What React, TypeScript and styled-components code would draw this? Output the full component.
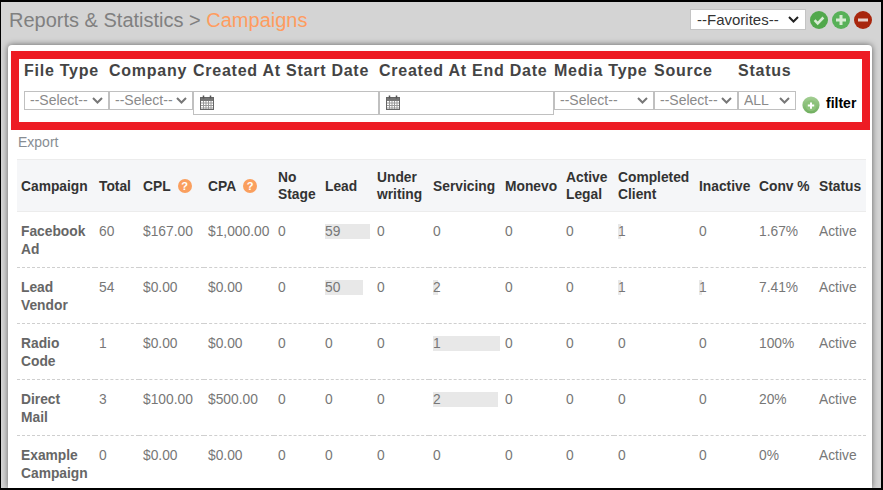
import React from 'react';
import styled, { createGlobalStyle, css } from 'styled-components';

const GlobalStyle = createGlobalStyle`
  html, body {
    margin: 0;
    padding: 0;
    background: #fff;
    overflow: hidden;
  }
  * {
    box-sizing: border-box;
  }
`;

const chevron = (color: string) =>
  `url("data:image/svg+xml,%3Csvg xmlns='http://www.w3.org/2000/svg' width='11' height='7'%3E%3Cpath d='M1 1l4.500 4.500L10 1' fill='none' stroke='${color}' stroke-width='2'/%3E%3C/svg%3E")`;

const selectBase = css`
  appearance: none;
  border-radius: 0;
  outline: none;
  background-color: #fff;
  background-repeat: no-repeat;
`;

const Frame = styled.div`
  width: 883px;
  height: 490px;
  display: flex;
  flex-direction: column;
  overflow: hidden;
  background: #d4d4d4;
  border: solid #000;
  border-width: 2px 2px 2px 1px;
  font-family: 'Liberation Sans', Arial, sans-serif;
`;

const TopBar = styled.header`
  height: 43px;
  flex: none;
  display: flex;
  justify-content: space-between;
  padding: 6px 9px 0 8px;
`;

const Title = styled.h1`
  margin: 0;
  font-size: 20px;
  line-height: 24px;
  font-weight: 400;
  color: #808080;
`;

const Crumb = styled.span`
  color: #ff9c5f;
`;

const FavBar = styled.div`
  display: flex;
  align-items: flex-start;
  gap: 4px;
  margin-top: 1px;
`;

const FavSelect = styled.select`
  ${selectBase}
  width: 116px;
  height: 21px;
  padding: 0 0 0 6px;
  border: 1px solid #c4c4c4;
  background-image: ${chevron('%23222')};
  background-position: right 6px center;
  color: #333;
  font: 15px 'Liberation Sans', Arial, sans-serif;
`;

const RoundIcon = styled.svg`
  display: block;
  width: 18px;
  height: 18px;
  margin-top: 2px;
`;

const Panel = styled.main`
  flex: 1;
  min-height: 0;
  margin: 0 9px 0 7px;
  padding: 6px 3px 0;
  overflow: hidden;
  background: #fff;
  border-radius: 4px 4px 0 0;
  box-shadow: 0 0 6px rgba(0, 0, 0, 0.55);
`;

const FilterBox = styled.section`
  height: 79px;
  margin-right: -1px;
  padding: 0 5px;
  display: flex;
  border: 8px solid #ed1c24;
`;

const Field = styled.div<{ $w: number }>`
  width: ${(p) => p.$w}px;
  flex: none;
`;

const FieldLabel = styled.div`
  height: 32px;
  padding-top: 3px;
  color: #444;
  font-size: 16px;
  line-height: 17px;
  font-weight: 700;
  letter-spacing: 0.75px;
  white-space: nowrap;
`;

const FieldSelect = styled.select`
  ${selectBase}
  display: block;
  width: 100%;
  height: 19px;
  padding: 0 0 1px 5px;
  border: 1px solid #c0c0c0;
  background-image: ${chevron('%23777')};
  background-position: right 5px center;
  color: #8a8a8a;
  font: 14px 'Liberation Sans', Arial, sans-serif;
`;

const DateBox = styled.div`
  height: 24px;
  padding: 3px 0 0 6px;
  border: 1px solid #c0c0c0;
  background: #fff;
`;

const FilterAction = styled.div`
  margin: 34px 0 0 6px;
  height: 24px;
  display: flex;
  align-items: center;
  gap: 6px;
  color: #000;
  font-size: 14px;
  font-weight: 700;
`;

const FilterText = styled.span`
  margin-top: -4px;
`;

const ExportLink = styled.div`
  height: 29px;
  padding: 4px 0 0 7px;
  color: #878d93;
  font-size: 14px;
  line-height: 16px;
`;

const Table = styled.table`
  width: 849px;
  margin-left: 6px;
  table-layout: fixed;
  border-collapse: collapse;
`;

const HeadRow = styled.tr`
  height: 52px;
  background: #f5f6f8;
  border-top: 1px solid #ececec;
  border-bottom: 1px solid #ececec;
`;

const Th = styled.th`
  padding: 1px 0 0 4px;
  color: #333;
  font-size: 13.8px;
  line-height: 17px;
  font-weight: 700;
  text-align: left;
  white-space: nowrap;
`;

const Row = styled.tr`
  height: 56px;
  border-bottom: 1px dashed #cfcfcf;

  &:last-child {
    border-bottom: 0;
  }
`;

const Td = styled.td`
  position: relative;
  padding: 11px 0 0 4px;
  vertical-align: top;
  color: #777;
  font-size: 13.8px;
  line-height: 18px;
`;

const NameCell = styled(Td)`
  color: #666;
  font-weight: 700;
`;

const Bar = styled.span`
  position: absolute;
  top: 12px;
  left: 4px;
  height: 15px;
  background: #e8e8e8;
`;

const CellValue = styled.span`
  position: relative;
`;

const HelpDot = styled.span`
  display: inline-block;
  width: 14px;
  height: 14px;
  margin-left: 7px;
  border-radius: 50%;
  background: #fa9f5e;
  color: #fff;
  font-size: 11px;
  line-height: 14px;
  font-weight: 700;
  text-align: center;
  vertical-align: 1px;
`;

const CheckIcon = () => (
  <RoundIcon viewBox="0 0 18 18">
    <circle cx="9" cy="9" r="9" fill="#52a84c" />
    <path d="M4.600 9.200l3.100 3.100 5.700-5.800" fill="none" stroke="#d8ecd4" strokeWidth="2.600" />
  </RoundIcon>
);

const PlusIcon = () => (
  <RoundIcon viewBox="0 0 18 18">
    <circle cx="9" cy="9" r="9" fill="#58b158" />
    <path d="M9 4v10M4 9h10" stroke="#d8ecd4" strokeWidth="3" />
  </RoundIcon>
);

const MinusIcon = () => (
  <RoundIcon viewBox="0 0 18 18">
    <circle cx="9" cy="9" r="9" fill="#a8260d" />
    <path d="M4 9h10" stroke="#e6d2cc" strokeWidth="3" />
  </RoundIcon>
);

const FilterPlusIcon = () => (
  <svg width="18" height="18" viewBox="0 0 18 18" style={{ display: 'block', flex: 'none' }}>
    <defs>
      <linearGradient id="filterGreen" x1="0" y1="0" x2="0" y2="1">
        <stop offset="0" stopColor="#a4cf94" />
        <stop offset="1" stopColor="#6fae5e" />
      </linearGradient>
    </defs>
    <circle cx="9" cy="9" r="8.600" fill="url(#filterGreen)" />
    <circle cx="9" cy="9.600" r="5.400" fill="#8cc27a" />
    <path d="M9 6.400v6.400M5.800 9.600h6.400" stroke="#fff" strokeWidth="2" />
  </svg>
);

const CalendarIcon = () => (
  <svg width="14" height="15" viewBox="0 0 14 15" style={{ display: 'block' }}>
    <rect x="0.500" y="2.500" width="13" height="12" fill="#fff" stroke="#666" />
    <rect x="1" y="3" width="12" height="3" fill="#777" />
    <path
      d="M1 8h12M1 10.500h12M1 13h12M3.500 6v8M6 6v8M8.500 6v8M11 6v8"
      stroke="#999"
      strokeWidth="1"
    />
    <path d="M3.500 0.500v3M10.500 0.500v3" stroke="#555" strokeWidth="1.500" />
  </svg>
);

type Filter = { label: string; width: number; kind: 'select' | 'date'; placeholder?: string };

const filters: Filter[] = [
  { label: 'File Type', width: 85, kind: 'select' },
  { label: 'Company', width: 84, kind: 'select' },
  { label: 'Created At Start Date', width: 186, kind: 'date' },
  { label: 'Created At End Date', width: 175, kind: 'date' },
  { label: 'Media Type', width: 100, kind: 'select' },
  { label: 'Source', width: 84, kind: 'select' },
  { label: 'Status', width: 58, kind: 'select', placeholder: 'ALL' },
];

const columnWidths = [78, 44, 65, 70, 47, 52, 56, 72, 61, 52, 81, 60, 60, 51];

const headers: React.ReactNode[] = [
  'Campaign',
  'Total',
  <>CPL<HelpDot>?</HelpDot></>,
  <>CPA<HelpDot>?</HelpDot></>,
  <>No<br />Stage</>,
  'Lead',
  <>Under<br />writing</>,
  'Servicing',
  'Monevo',
  <>Active<br />Legal</>,
  <>Completed<br />Client</>,
  'Inactive',
  'Conv %',
  'Status',
];

type Campaign = {
  first: string;
  second: string;
  total: string;
  cpl: string;
  cpa: string;
  stages: { value: string; bar?: number }[];
  conv: string;
};

const v = (value: string, bar?: number) => ({ value, bar });

const campaigns: Campaign[] = [
  {
    first: 'Facebook',
    second: 'Ad',
    total: '60',
    cpl: '$167.00',
    cpa: '$1,000.00',
    stages: [v('0'), v('59', 45), v('0'), v('0'), v('0'), v('0'), v('1', 3), v('0')],
    conv: '1.67%',
  },
  {
    first: 'Lead',
    second: 'Vendor',
    total: '54',
    cpl: '$0.00',
    cpa: '$0.00',
    stages: [v('0'), v('50', 38), v('0'), v('2', 5), v('0'), v('0'), v('1', 3), v('1', 3)],
    conv: '7.41%',
  },
  {
    first: 'Radio',
    second: 'Code',
    total: '1',
    cpl: '$0.00',
    cpa: '$0.00',
    stages: [v('0'), v('0'), v('0'), v('1', 67), v('0'), v('0'), v('0'), v('0')],
    conv: '100%',
  },
  {
    first: 'Direct',
    second: 'Mail',
    total: '3',
    cpl: '$100.00',
    cpa: '$500.00',
    stages: [v('0'), v('0'), v('0'), v('2', 65), v('0'), v('0'), v('0'), v('0')],
    conv: '20%',
  },
  {
    first: 'Example',
    second: 'Campaign',
    total: '0',
    cpl: '$0.00',
    cpa: '$0.00',
    stages: [v('0'), v('0'), v('0'), v('0'), v('0'), v('0'), v('0'), v('0')],
    conv: '0%',
  },
];

const App = () => {
  return (
    <Frame>
      <GlobalStyle />
      <TopBar>
        <Title>
          Reports &amp; Statistics &gt; <Crumb>Campaigns</Crumb>
        </Title>
        <FavBar>
          <FavSelect defaultValue="">
            <option value="">--Favorites--</option>
          </FavSelect>
          <CheckIcon />
          <PlusIcon />
          <MinusIcon />
        </FavBar>
      </TopBar>
      <Panel>
        <FilterBox>
          {filters.map((f) => (
            <Field key={f.label} $w={f.width}>
              <FieldLabel>{f.label}</FieldLabel>
              {f.kind === 'select' ? (
                <FieldSelect defaultValue="">
                  <option value="">{f.placeholder ?? '--Select--'}</option>
                </FieldSelect>
              ) : (
                <DateBox>
                  <CalendarIcon />
                </DateBox>
              )}
            </Field>
          ))}
          <FilterAction>
            <FilterPlusIcon />
            <FilterText>filter</FilterText>
          </FilterAction>
        </FilterBox>
        <ExportLink>Export</ExportLink>
        <Table>
          <colgroup>
            {columnWidths.map((w, i) => (
              <col key={i} style={{ width: w }} />
            ))}
          </colgroup>
          <thead>
            <HeadRow>
              {headers.map((h, i) => (
                <Th key={i}>{h}</Th>
              ))}
            </HeadRow>
          </thead>
          <tbody>
            {campaigns.map((c) => (
              <Row key={c.first}>
                <NameCell>
                  {c.first}
                  <br />
                  {c.second}
                </NameCell>
                <Td>{c.total}</Td>
                <Td>{c.cpl}</Td>
                <Td>{c.cpa}</Td>
                {c.stages.map((s, i) => (
                  <Td key={i}>
                    {s.bar ? <Bar style={{ width: s.bar }} /> : null}
                    <CellValue>{s.value}</CellValue>
                  </Td>
                ))}
                <Td>{c.conv}</Td>
                <Td>Active</Td>
              </Row>
            ))}
          </tbody>
        </Table>
      </Panel>
    </Frame>
  );
};

export default App;
